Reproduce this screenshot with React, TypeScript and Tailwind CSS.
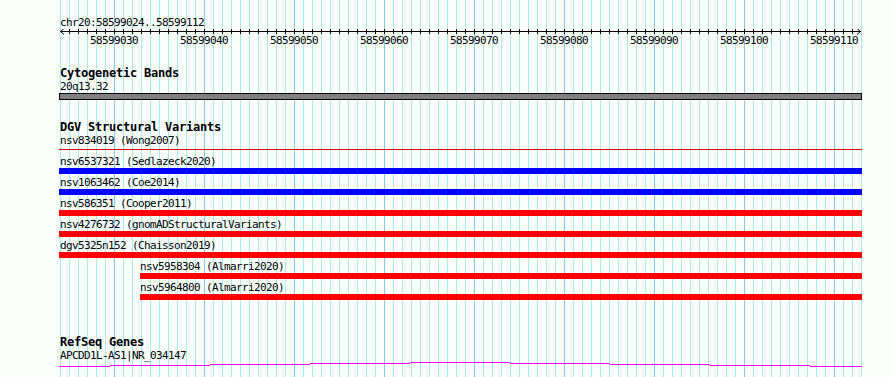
import React from "react";

const START = 58599024;
const BP = 9; // pixels per base
const LEFT = 60;
const TRACK_W = 801;

const xOf = (pos: number) => (pos - START) * BP;

const small = "font-['DejaVu_Sans_Mono',monospace] text-[11px] tracking-[-0.623px] leading-[13px] h-[13px] whitespace-nowrap text-black";
const bold = "font-['DejaVu_Sans_Mono',monospace] font-bold text-[12px] tracking-[-0.225px] leading-[13px] h-[13px] whitespace-nowrap text-black";

type Variant = {
  name: string;
  color: "line" | "blue" | "red";
  left: number; // px from track start
};

const variants: Variant[] = [
  { name: "nsv834019 (Wong2007)", color: "line", left: 0 },
  { name: "nsv6537321 (Sedlazeck2020)", color: "blue", left: 0 },
  { name: "nsv1063462 (Coe2014)", color: "blue", left: 0 },
  { name: "nsv586351 (Cooper2011)", color: "red", left: 0 },
  { name: "nsv4276732 (gnomADStructuralVariants)", color: "red", left: 0 },
  { name: "dgv5325n152 (Chaisson2019)", color: "red", left: 0 },
  { name: "nsv5958304 (Almarri2020)", color: "red", left: xOf(58599033) },
  { name: "nsv5964800 (Almarri2020)", color: "red", left: xOf(58599033) },
];

const Grid: React.FC = () => {
  const lines = [];
  for (let k = 0; k <= 89; k++) {
    const major = (k - 6) % 10 === 0;
    lines.push(
      <line
        key={k}
        x1={LEFT + k * BP + 0.5}
        x2={LEFT + k * BP + 0.5}
        y1={0}
        y2={377}
        stroke={major ? "#86c6ec" : "#a8eaee"}
        strokeWidth={1}
      />
    );
  }
  return (
    <svg className="absolute inset-0" width={890} height={377}>
      {lines}
    </svg>
  );
};

const Ruler: React.FC = () => {
  const ticks = [];
  for (let k = 1; k < 89; k++) {
    ticks.push(
      <line key={k} x1={k * BP + 0.5} x2={k * BP + 0.5} y1={0} y2={5} stroke="#000" />
    );
  }
  const labels = [];
  for (let p = 58599030; p <= 58599110; p += 10) {
    labels.push(
      <div
        key={p}
        className={"absolute top-[5px] w-[60px] text-center " + small}
        style={{ left: xOf(p) - 30 }}
      >
        {p}
      </div>
    );
  }
  return (
    <div className="relative h-[18px]">
      <svg className="absolute left-0 top-0" width={TRACK_W + 2} height={6}>
        <line x1={0} x2={TRACK_W} y1={2.5} y2={2.5} stroke="#000" />
        {ticks}
        <polyline points="4,-0.5 0.5,2.5 4,5.5" fill="none" stroke="#000" />
        <polyline points={`${TRACK_W - 4},-0.5 ${TRACK_W - 0.5},2.5 ${TRACK_W - 4},5.5`} fill="none" stroke="#000" />
      </svg>
      {labels}
    </div>
  );
};

const GeneLine: React.FC = () => {
  // stepped transcript line as drawn by the browser
  const segs: [number, number, number][] = [
    [59, 110, 4],
    [110, 210, 3],
    [210, 310, 2],
    [310, 410, 1],
    [410, 510, 0],
    [510, 610, 1],
    [610, 710, 2],
    [710, 810, 3],
    [810, 862, 4],
  ];
  return (
    <svg className="block -ml-[60px]" width={890} height={6}>
      {segs.map(([a, b, y], i) => (
        <line key={i} x1={a} x2={b} y1={y + 0.5} y2={y + 0.5} stroke="#ff00ff" />
      ))}
    </svg>
  );
};

export default function App() {
  return (
    <div className="relative w-[890px] h-[377px] overflow-hidden bg-[#fcfffc]">
      <Grid />
      <div className="relative pl-[60px]">
        {/* ruler */}
        <div className={"mt-[16px] " + small}>chr20:58599024..58599112</div>
        <Ruler />

        {/* cytoband */}
        <div className={"mt-[20px] " + bold}>Cytogenetic Bands</div>
        <div className={small}>20q13.32</div>
        <div className="-ml-px w-[803px] h-[7px] border border-black bg-[#808080]" />

        {/* DGV */}
        <div className={"mt-[21px] " + bold}>DGV Structural Variants</div>
        {variants.map((v) => (
          <div key={v.name} className="h-[21px]">
            <div className={small} style={{ marginLeft: v.left ? v.left - 1 : 0 }}>
              {v.name}
            </div>
            {v.color === "line" ? (
              <div className="h-[6px] pt-[2px]">
                <div className="-ml-px w-[803px] h-px bg-[#e00000]" />
              </div>
            ) : (
              <div
                className={
                  "h-[6px] " + (v.color === "blue" ? "bg-[#0000ff]" : "bg-[#ff0000]")
                }
                style={{ marginLeft: v.left - 1, width: 803 - v.left }}
              />
            )}
          </div>
        ))}

        {/* RefSeq */}
        <div className={"mt-[34px] " + bold}>RefSeq Genes</div>
        <div className={small}>APCDD1L-AS1|NR_034147</div>
        <GeneLine />
      </div>
    </div>
  );
}
